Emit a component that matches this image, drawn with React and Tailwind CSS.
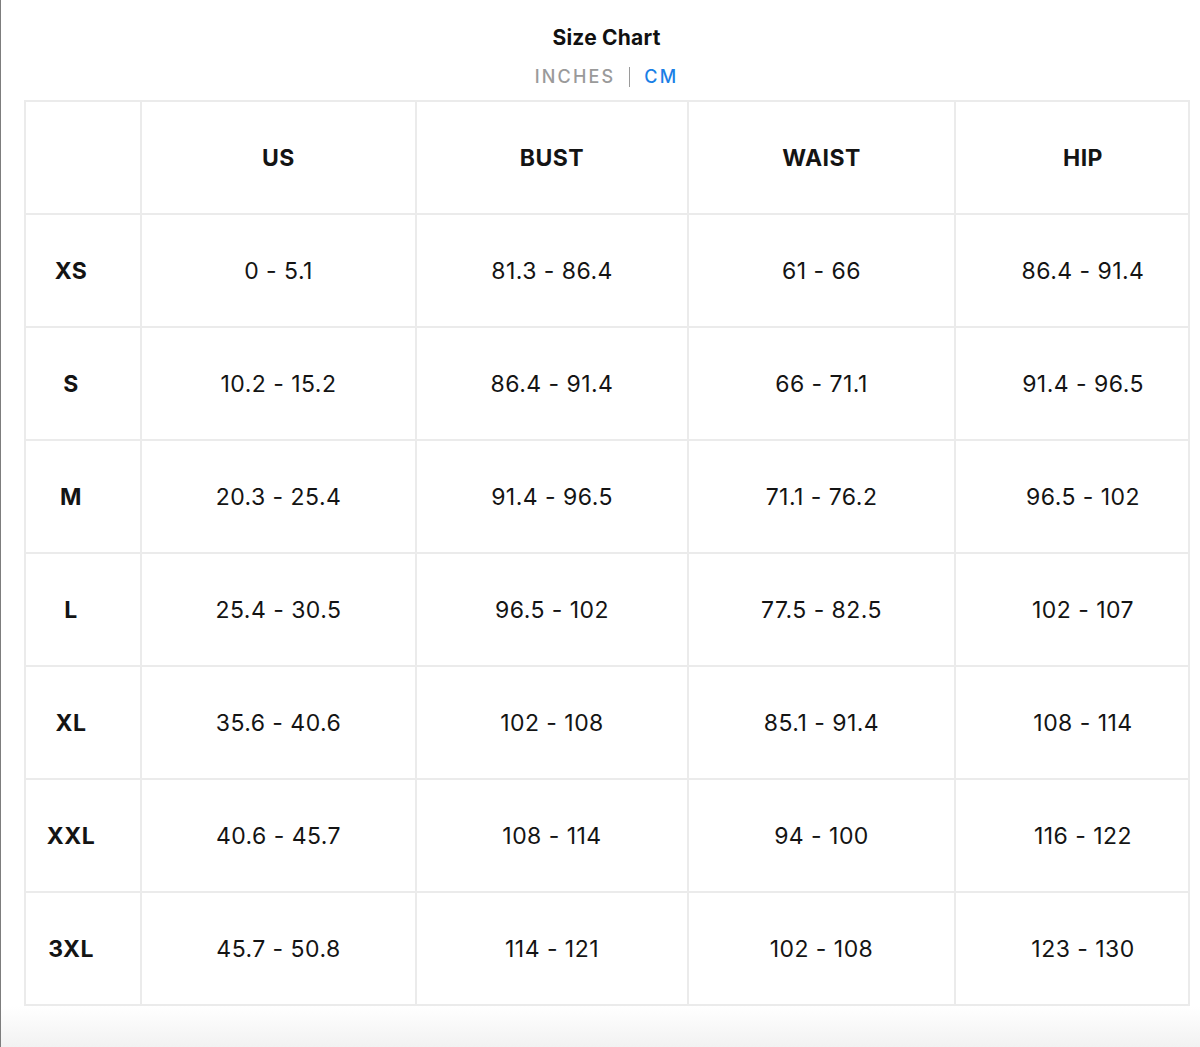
import React from 'react';

const columns = ['US', 'BUST', 'WAIST', 'HIP'];

const rows = [
  ['XS', '0 - 5.1', '81.3 - 86.4', '61 - 66', '86.4 - 91.4'],
  ['S', '10.2 - 15.2', '86.4 - 91.4', '66 - 71.1', '91.4 - 96.5'],
  ['M', '20.3 - 25.4', '91.4 - 96.5', '71.1 - 76.2', '96.5 - 102'],
  ['L', '25.4 - 30.5', '96.5 - 102', '77.5 - 82.5', '102 - 107'],
  ['XL', '35.6 - 40.6', '102 - 108', '85.1 - 91.4', '108 - 114'],
  ['XXL', '40.6 - 45.7', '108 - 114', '94 - 100', '116 - 122'],
  ['3XL', '45.7 - 50.8', '114 - 121', '102 - 108', '123 - 130'],
];

const widths = ['w-[116px]', 'w-[275px]', 'w-[272px]', 'w-[267px]', 'w-[234px]'];

// first column sits a bit left of centre, last a bit right, as in the source
const cellPad = (i) => (i === 0 ? 'pr-[24px]' : i === 4 ? 'pl-[22px]' : '');

export default function App() {
  return (
    <div className="min-h-[1047px] bg-white border-l border-[#7d7d7d] flex flex-col" style={{ fontFamily: 'Inter, "Liberation Sans", sans-serif' }}>
      <div className="pt-[25px] flex flex-col items-center pl-[12px]">
        <h2 className="text-[21px] leading-[26px] font-bold text-[#111] tracking-[0.01em]">Size Chart</h2>
        <div className="mt-[14px] flex items-center text-[18px] leading-[24px] font-medium tracking-[0.12em]">
          <span className="text-[#9a9a9a]">INCHES</span>
          <span className="mx-[14px] w-px h-[20px] bg-[#9a9a9a]" />
          <span className="text-[#1a7fe6]">CM</span>
        </div>
      </div>

      <div className="mt-[11px] pl-[23px]">
        <table className="border-collapse table-fixed w-[1165px] text-[23px] tracking-[0.02em] text-[#141414]">
          <colgroup>
            {widths.map((w, i) => (
              <col key={i} className={w} />
            ))}
          </colgroup>
          <thead>
            <tr className="h-[113px]">
              <th className="border-2 border-[#ebebeb]" />
              {columns.map((c, i) => (
                <th key={c} className={`border-2 border-[#ebebeb] font-bold text-center pt-[2px] ${cellPad(i + 1)}`}>
                  {c}
                </th>
              ))}
            </tr>
          </thead>
          <tbody>
            {rows.map((r) => (
              <tr key={r[0]} className="h-[113px]">
                {r.map((v, i) => (
                  <td
                    key={i}
                    className={`border-2 border-[#ebebeb] text-center pt-[2px] ${i === 0 ? 'font-bold' : ''} ${cellPad(i)}`}
                  >
                    {v}
                  </td>
                ))}
              </tr>
            ))}
          </tbody>
        </table>
      </div>

      <div className="flex-1 bg-gradient-to-b from-white to-[#f2f2f2]" />
    </div>
  );
}
